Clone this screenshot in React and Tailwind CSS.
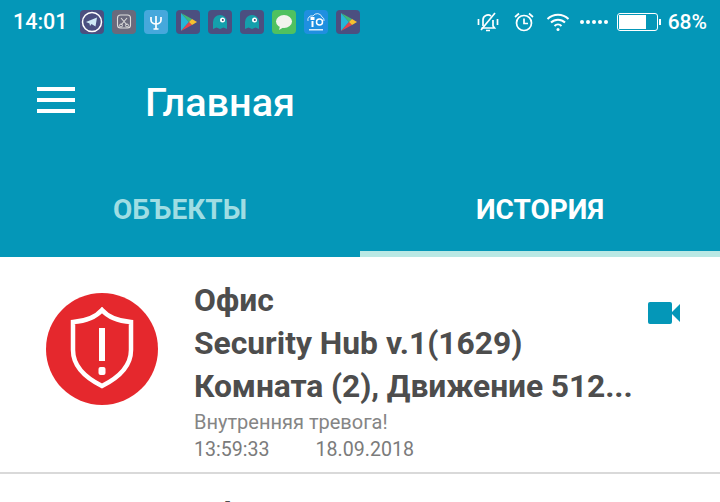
import React from "react";

const Tile = ({ bg, children }) => (
  <div className={`w-6 h-6 rounded-[4px] flex items-center justify-center overflow-hidden ${bg}`}>
    <svg width="24" height="24" viewBox="0 0 24 24">{children}</svg>
  </div>
);
const Play = () => (
  <Tile bg="bg-[#4b4f80]">
    <path d="M5 3 L13 12 L5 21Z" fill="#27b6d8" />
    <path d="M5 3 L16 9 L13 12Z" fill="#3fb877" />
    <path d="M5 21 L16 15 L13 12Z" fill="#e8434a" />
    <path d="M16 9 L21 12 L16 15 L13 12Z" fill="#f6c12f" />
  </Tile>
);
const Ghost = () => (
  <Tile bg="bg-[#4b4f80]">
    <path d="M5 19 V12 a7 7 0 0 1 14 0 V19 l-3.500-1.500 -3.500 1.500 -3.500-1.500Z" fill="#14a0ac" />
    <circle cx="14.500" cy="10" r="2.500" fill="#fff" />
    <circle cx="14.800" cy="10" r="1" fill="#35406a" />
  </Tile>
);

export default function App() {
  return (
    <div className="w-[720px] h-[502px] overflow-hidden bg-white font-['Roboto',sans-serif]">
      <div className="h-[257px] bg-[#0497b8] flex flex-col">
        <div className="h-[44px] flex items-center pl-[13px] pr-[13px] text-white">
          <span className="text-[21.500px] font-medium w-[67px] leading-none">14:01</span>
          <div className="flex gap-2">
            <Tile bg="bg-[#4b4f80]">
              <circle cx="12" cy="12" r="9.500" fill="none" stroke="#fff" strokeWidth="1.500" />
              <path d="M6 12 L17 7.500 L15.500 16.500 L11.500 14 L10 16 L9.500 13.500Z" fill="#cfe9f5" />
            </Tile>
            <Tile bg="bg-[#6a6a7c]">
              <rect x="5.500" y="5" width="13" height="13" rx="3" fill="none" stroke="#ddd" strokeWidth="1.100" />
              <path d="M9 8 L15 15 M15 8 L9 15" stroke="#ddd" strokeWidth="1.100" />
              <circle cx="9" cy="15.500" r="1.500" fill="none" stroke="#ddd" strokeWidth="1" />
              <circle cx="15" cy="15.500" r="1.500" fill="none" stroke="#ddd" strokeWidth="1" />
            </Tile>
            <Tile bg="bg-[#46a8dc]">
              <path d="M7 7 V10 a5 4 0 0 0 10 0 V7 M12 6 V19 M9.500 19 H14.500" fill="none" stroke="#fff" strokeWidth="1.700" />
            </Tile>
            <Play />
            <Ghost />
            <Ghost />
            <Tile bg="bg-[#4fc160]">
              <ellipse cx="12" cy="11.500" rx="8" ry="6.500" fill="#f1f3ee" />
              <path d="M8 16 L7 20 L12 17Z" fill="#f1f3ee" />
            </Tile>
            <Tile bg="bg-[#1f8fe0]">
              <path d="M4 11 a4 4 0 0 1 5-5 a5 5 0 0 1 9 1 a3.500 3.500 0 0 1 2 4" fill="none" stroke="#fff" strokeWidth="0.800" />
              <rect x="6.500" y="7" width="4" height="3" fill="#fff" />
              <rect x="7.500" y="11" width="2" height="6" fill="#fff" />
              <circle cx="15.500" cy="12" r="3" fill="none" stroke="#fff" strokeWidth="1.500" />
              <rect x="5" y="19" width="14" height="1.500" fill="#d5ecfb" />
            </Tile>
            <Play />
          </div>
          <div className="ml-auto flex items-center">
            <svg width="24" height="24" viewBox="0 0 24 24" fill="none" stroke="#fff" strokeWidth="1.700" className="mr-[13px]">
              <path d="M7 16 V10 a5 5 0 0 1 8-4 M17 10 V16 L18.500 18 H5.500 M10 20.500 H14" />
              <path d="M5 20 L19 3" />
              <path d="M2.500 9 V15 M21.500 9 V15" />
            </svg>
            <svg width="22" height="22" viewBox="0 0 22 22" fill="none" stroke="#fff" strokeWidth="1.700" className="mr-[10px]">
              <circle cx="11" cy="12" r="7.500" />
              <path d="M11 7.500 V12.500 H15 M2 6 L6 2.500 M20 6 L16 2.500" />
            </svg>
            <svg width="26" height="20" viewBox="0 0 24 20" fill="none" stroke="#fff" strokeWidth="2" className="mr-[9px]">
              <path d="M1.500 7 a15 15 0 0 1 21 0 M5 10.500 a10 10 0 0 1 14 0 M8.500 14 a5 5 0 0 1 7 0" />
              <circle cx="12" cy="17.500" r="1.500" fill="#fff" stroke="none" />
            </svg>
            <div className="flex gap-[2px] mr-[9px]">
              <span className="w-1 h-1 rounded-full bg-white" />
              <span className="w-1 h-1 rounded-full bg-white" />
              <span className="w-1 h-1 rounded-full bg-white" />
              <span className="w-1 h-1 rounded-full bg-white" />
              <span className="w-1 h-1 rounded-full bg-white" />
            </div>
            <div className="w-[41px] h-[18px] border border-white rounded-[3px] p-[1px] mr-[1px]">
              <div className="w-[27px] h-full bg-white" />
            </div>
            <span className="w-[2px] h-[6px] bg-white mr-[7px]" />
            <span className="text-[21px] font-medium leading-none">68%</span>
          </div>
        </div>
        <div className="h-[116px] flex items-center text-white">
          <div className="w-[145px] pl-[37px] pb-[4px]">
            <div className="w-[38px] flex flex-col gap-[7px]">
              <div className="h-[4px] bg-white" />
              <div className="h-[4px] bg-white" />
              <div className="h-[4px] bg-white" />
            </div>
          </div>
          <span className="text-[39.700px] font-medium leading-none pt-[2px]">Главная</span>
        </div>
        <div className="flex-1 flex">
          <div className="flex-1 flex flex-col">
            <div className="flex-1 flex items-center justify-center pt-[8px] text-[28px] font-bold text-[#9fdde3] leading-none">ОБЪЕКТЫ</div>
            <div className="h-[6px]" />
          </div>
          <div className="flex-1 flex flex-col">
            <div className="flex-1 flex items-center justify-center pt-[8px] text-[28px] font-bold text-white leading-none">ИСТОРИЯ</div>
            <div className="h-[6px] bg-[#b9e8e4]" />
          </div>
        </div>
      </div>
      <div className="h-[217px] border-b-2 border-[#d9d9d9] flex">
        <div className="w-[194px] pl-[46px] pt-[36px]">
          <div className="w-[112px] h-[112px] rounded-full bg-[#e5282d] flex items-center justify-center">
            <svg width="64" height="82" viewBox="0 0 64 82" fill="none" stroke="#fff" strokeWidth="4.500" className="mb-[2px]">
              <path d="M32 3 C26 10 16 14 3 15 V43 C3 60 18 72 32 79 C46 72 61 60 61 43 V15 C48 14 38 10 32 3Z" />
              <rect x="29" y="21" width="6" height="33" fill="#fff" stroke="none" />
              <rect x="28.500" y="60" width="7" height="8" rx="2" fill="#fff" stroke="none" />
            </svg>
          </div>
        </div>
        <div className="w-[454px] pt-[22px] flex flex-col">
          <div className="text-[31.800px] font-bold text-[#4d4d4d] leading-[43px]">Офис</div>
          <div className="text-[31.800px] font-bold text-[#4d4d4d] leading-[43px]">Security Hub v.1(1629)</div>
          <div className="text-[31.800px] font-bold text-[#4d4d4d] leading-[43px] whitespace-nowrap tracking-[-0.1px]">Комната (2), Движение 512...</div>
          <div className="text-[20px] text-[#858585] leading-[28px]">Внутренняя тревога!</div>
          <div className="text-[19.600px] text-[#7b7b7b] leading-[28px] flex gap-[46px]">
            <span>13:59:33</span>
            <span>18.09.2018</span>
          </div>
        </div>
        <div className="pt-[45px]">
          <svg width="32" height="22" viewBox="0 0 32 22" fill="#0497b8">
            <rect x="0" y="0" width="24" height="22" rx="2" />
            <path d="M23 11 L32 2 V20Z" />
          </svg>
        </div>
      </div>
      <div className="pl-[194px] pt-[19px] text-[31.800px] font-bold text-[#4d4d4d] leading-[43px]">Офис</div>
    </div>
  );
}
